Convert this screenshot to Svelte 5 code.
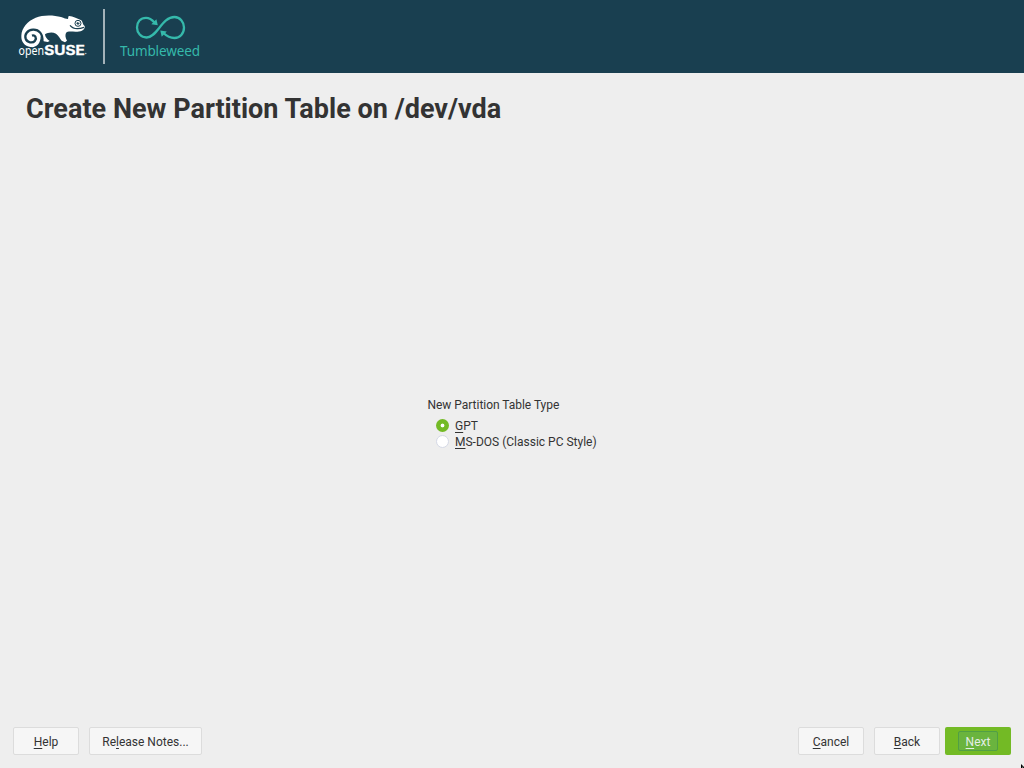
<script>
  const types = [
    { key: 'G', rest: 'PT', selected: true },
    { key: 'M', rest: 'S-DOS (Classic PC Style)', selected: false }
  ];
</script>

<div class="screen">
  <header>
    <svg width="210" height="73" viewBox="0 0 210 73">
      <g transform="translate(10 5) scale(.33333)">
        <path fill="#fff" d="M34 92 C35 68 53 48 77 38 C98 29 132 30 153 36 C163 39 168 42 174 42 C176 36 173 34 178 33 C189 34 199 40 214 46 C219 52 218 60 224 63 C226 73 216 80 202 80 C188 81 172 77 168 84 C165 91 166 98 171 107 L165 112 L155 107 C150 100 145 91 138 86 C126 80 113 83 105 88 C106 96 110 102 119 108 L113 111 L101 109 C95 104 94 97 92 94 C92 117 78 129 61 126 C44 123 33 110 34 92Z" />
        <path fill="none" stroke="#193f50" stroke-width="7" d="M97 109 C99 87 87 73 69 74 C52 75 43 88 47 101 C51 113 68 116 75 107 C81 98 75 89 66 92" />
        <path fill="none" stroke="#193f50" stroke-width="3.5" d="M180 61 C188 71 202 74 222 67" />
        <circle cx="204" cy="55" r="9" fill="#fff" stroke="#193f50" stroke-width="3" />
        <circle cx="204" cy="55" r="4.2" fill="#193f50" />
        <path stroke="#fff" stroke-width="2" d="M203 53 h4" />
      </g>
      <text class="open" x="18.5" y="54.7" textLength="25.5" lengthAdjust="spacingAndGlyphs">open</text>
      <text class="suse" x="44.3" y="54.7" textLength="40.5" lengthAdjust="spacingAndGlyphs">SUSE</text>
      <circle cx="85.8" cy="53.5" r=".7" fill="#c5d0d4" />
      <rect x="103" y="9" width="2" height="55" fill="#a3b2b9" />
      <g fill="none" stroke="#35b9ab" stroke-width="2.3">
        <path d="M154.5 22.5 C151 18.5 149 17.8 146 17.8 C140.5 17.8 137 22 137 27.5 C137 33 141 37.5 146.5 37.5 C157 37.5 162 17 174.5 17 C180 17 184 22 184 27.5 C184 33.5 180 38 174.5 38 C170 38 167 36.5 163.5 33" />
      </g>
      <path fill="#35b9ab" d="M157.8 25.2 L151.3 24.2 L156.4 19.3Z M160.3 30.5 L166.8 31.5 L161.7 36.7Z" />
      <text class="product" x="120" y="55.5" textLength="80" lengthAdjust="spacing">Tumbleweed</text>
    </svg>
  </header>

  <h1>Create New Partition Table on /dev/vda</h1>

  <main>
    <div class="choices">
      <div class="caption">New Partition Table Type</div>
      {#each types as type}
        <div class="option" role="radio" aria-checked={type.selected} tabindex="0">
          <span class="radio" class:selected={type.selected}></span>
          <span><u>{type.key}</u>{type.rest}</span>
        </div>
      {/each}
    </div>
  </main>

  <footer>
    <button><u>H</u>elp</button>
    <button class="notes">Re<u>l</u>ease Notes...</button>
    <button class="cancel"><u>C</u>ancel</button>
    <button class="back"><u>B</u>ack</button>
    <button class="next"><span><u>N</u>ext</span></button>
  </footer>

  <svg class="pointer" width="4" height="4" viewBox="0 0 4 4"><path d="M1 0 L4 3 V4 H1Z" fill="#000" /><path d="M2 2 L3.5 4 H2Z" fill="#777" /></svg>
</div>

<style>
  :global(body) { margin: 0; overflow: hidden; }
  .screen {
    position: relative;
    display: flex;
    flex-direction: column;
    box-sizing: border-box;
    width: 1024px;
    height: 768px;
    overflow: hidden;
    background: #eee;
    color: #333;
    font: 12px/16px Roboto, sans-serif;
  }
  header { height: 73px; flex: none; background: #193f50; }
  header svg { display: block; }
  .open { font: 12px "Noto Sans", sans-serif; fill: #fff; }
  .suse { font: 700 12.8px Inter, sans-serif; fill: #fff; stroke: #fff; stroke-width: .3px; }
  .product { font: 13.5px "Noto Sans", sans-serif; fill: #35b9ab; }
  h1 { margin: 20px 0 0 26px; font-size: 27px; line-height: 32px; font-weight: 700; letter-spacing: .02px; white-space: nowrap; }
  main { flex: 1; padding: 272px 0 0 427.5px; }
  .caption { margin-bottom: 5px; letter-spacing: -.03px; }
  .option { display: flex; align-items: flex-start; height: 16px; padding-left: 8.5px; gap: 6px; outline: none; }
  .radio { width: 13px; height: 13px; margin-top: 1px; box-sizing: border-box; border-radius: 50%; background: #fff; border: 1px solid #d5d9e6; }
  .radio.selected { border: 0; background: radial-gradient(circle, #fff 1.4px, #73ba25 2.3px); }
  u { text-decoration: underline; text-decoration-thickness: 1px; text-underline-offset: 2px; text-decoration-skip-ink: none; }
  footer { display: flex; height: 28px; padding: 0 13px 13px; }
  button {
    box-sizing: border-box;
    width: 66px;
    height: 28px;
    margin: 0;
    padding: 2px 0 0;
    border: 1px solid #dcdcdc;
    border-radius: 2px;
    background: #f6f6f6;
    color: #333;
    font: 12px/16px Roboto, sans-serif;
    white-space: nowrap;
  }
  .notes { width: 113px; margin-left: 10px; }
  .cancel { margin-left: auto; }
  .back { margin-left: 10px; }
  .next { display: flex; align-items: center; justify-content: center; margin-left: 5px; padding: 0; border: 0; background: #73ba25; color: #e4eee6; }
  .next span { box-sizing: border-box; width: 40px; height: 20px; padding-top: 2px; border: 1px solid #519f45; border-radius: 2px; background: #6ab43e; }
  .pointer { position: absolute; right: 0; bottom: 0; }
</style>
